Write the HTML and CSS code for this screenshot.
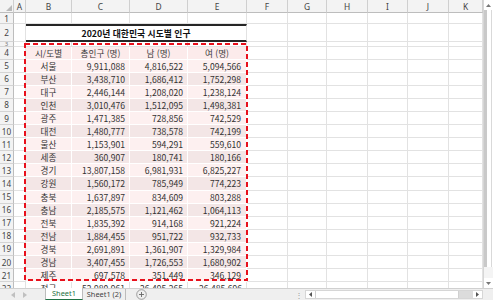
FILE: index.html
```html
<!DOCTYPE html>
<html lang="ko">
<head>
<meta charset="utf-8">
<title>Sheet</title>
<link rel="stylesheet" href="styles.css">
</head>
<body>
<div class="app">
  <div class="main">
    <div class="sheet">
      <div class="row hdr">
        <div class="corner"><span class="tri"></span></div>
        <div class="ch">A</div><div class="ch">B</div><div class="ch">C</div><div class="ch">D</div><div class="ch">E</div><div class="ch">F</div><div class="ch">G</div><div class="ch">H</div><div class="ch">I</div><div class="ch">J</div><div class="ch">K</div>
      </div>
      <div class="row r1">
        <div class="rh">1</div><i></i><i></i><i></i><i></i><i></i><i></i><i></i><i></i><i></i><i></i><i></i>
      </div>
      <div class="row r2">
        <div class="rh">2</div><i></i><div class="title">2020년 대한민국 시도별 인구</div><i></i><i></i><i></i><i></i><i></i><i></i>
      </div>
      <div class="row r3">
        <div class="rh rh3">3</div><i></i><i></i><i></i><i></i><i></i><i></i><i></i><i></i><i></i><i></i><i></i>
      </div>
      <div class="row rd th">
        <div class="rh">4</div><i></i><div class="t ctr">시/도별</div><div class="t ctr">총인구 (명)</div><div class="t ctr">남 (명)</div><div class="t ctr">여 (명)</div><i></i><i></i><i></i><i></i><i></i><i></i>
      </div>
      <div class="row rd lt">
        <div class="rh">5</div><i></i><div class="t ctr">서울</div><div class="t num">9,911,088</div><div class="t num">4,816,522</div><div class="t num">5,094,566</div><i></i><i></i><i></i><i></i><i></i><i></i>
      </div>
      <div class="row rd dk">
        <div class="rh">6</div><i></i><div class="t ctr">부산</div><div class="t num">3,438,710</div><div class="t num">1,686,412</div><div class="t num">1,752,298</div><i></i><i></i><i></i><i></i><i></i><i></i>
      </div>
      <div class="row rd lt">
        <div class="rh">7</div><i></i><div class="t ctr">대구</div><div class="t num">2,446,144</div><div class="t num">1,208,020</div><div class="t num">1,238,124</div><i></i><i></i><i></i><i></i><i></i><i></i>
      </div>
      <div class="row rd dk">
        <div class="rh">8</div><i></i><div class="t ctr">인천</div><div class="t num">3,010,476</div><div class="t num">1,512,095</div><div class="t num">1,498,381</div><i></i><i></i><i></i><i></i><i></i><i></i>
      </div>
      <div class="row rd lt">
        <div class="rh">9</div><i></i><div class="t ctr">광주</div><div class="t num">1,471,385</div><div class="t num">728,856</div><div class="t num">742,529</div><i></i><i></i><i></i><i></i><i></i><i></i>
      </div>
      <div class="row rd dk">
        <div class="rh">10</div><i></i><div class="t ctr">대전</div><div class="t num">1,480,777</div><div class="t num">738,578</div><div class="t num">742,199</div><i></i><i></i><i></i><i></i><i></i><i></i>
      </div>
      <div class="row rd lt">
        <div class="rh">11</div><i></i><div class="t ctr">울산</div><div class="t num">1,153,901</div><div class="t num">594,291</div><div class="t num">559,610</div><i></i><i></i><i></i><i></i><i></i><i></i>
      </div>
      <div class="row rd dk">
        <div class="rh">12</div><i></i><div class="t ctr">세종</div><div class="t num">360,907</div><div class="t num">180,741</div><div class="t num">180,166</div><i></i><i></i><i></i><i></i><i></i><i></i>
      </div>
      <div class="row rd lt">
        <div class="rh">13</div><i></i><div class="t ctr">경기</div><div class="t num">13,807,158</div><div class="t num">6,981,931</div><div class="t num">6,825,227</div><i></i><i></i><i></i><i></i><i></i><i></i>
      </div>
      <div class="row rd dk">
        <div class="rh">14</div><i></i><div class="t ctr">강원</div><div class="t num">1,560,172</div><div class="t num">785,949</div><div class="t num">774,223</div><i></i><i></i><i></i><i></i><i></i><i></i>
      </div>
      <div class="row rd lt">
        <div class="rh">15</div><i></i><div class="t ctr">충북</div><div class="t num">1,637,897</div><div class="t num">834,609</div><div class="t num">803,288</div><i></i><i></i><i></i><i></i><i></i><i></i>
      </div>
      <div class="row rd dk">
        <div class="rh">16</div><i></i><div class="t ctr">충남</div><div class="t num">2,185,575</div><div class="t num">1,121,462</div><div class="t num">1,064,113</div><i></i><i></i><i></i><i></i><i></i><i></i>
      </div>
      <div class="row rd lt">
        <div class="rh">17</div><i></i><div class="t ctr">전북</div><div class="t num">1,835,392</div><div class="t num">914,168</div><div class="t num">921,224</div><i></i><i></i><i></i><i></i><i></i><i></i>
      </div>
      <div class="row rd dk">
        <div class="rh">18</div><i></i><div class="t ctr">전남</div><div class="t num">1,884,455</div><div class="t num">951,722</div><div class="t num">932,733</div><i></i><i></i><i></i><i></i><i></i><i></i>
      </div>
      <div class="row rd lt">
        <div class="rh">19</div><i></i><div class="t ctr">경북</div><div class="t num">2,691,891</div><div class="t num">1,361,907</div><div class="t num">1,329,984</div><i></i><i></i><i></i><i></i><i></i><i></i>
      </div>
      <div class="row rd dk">
        <div class="rh">20</div><i></i><div class="t ctr">경남</div><div class="t num">3,407,455</div><div class="t num">1,726,553</div><div class="t num">1,680,902</div><i></i><i></i><i></i><i></i><i></i><i></i>
      </div>
      <div class="row rd lt">
        <div class="rh">21</div><i></i><div class="t ctr">제주</div><div class="t num">697,578</div><div class="t num">351,449</div><div class="t num">346,129</div><i></i><i></i><i></i><i></i><i></i><i></i>
      </div>
      <div class="row rd">
        <div class="rh">22</div><i></i><div class="c ctr">전국</div><div class="c num">52,980,961</div><div class="c num">26,495,265</div><div class="c num">26,485,696</div><i></i><i></i><i></i><i></i><i></i><i></i>
      </div>
      <svg class="marquee" width="224" height="238" viewBox="0 0 224 238">
        <rect x="1" y="1" width="222" height="236" fill="none" stroke="#e8101c" stroke-width="2" stroke-dasharray="5 3"/>
      </svg>
    </div>
    <div class="vscroll">
      <div class="vbtn"><svg width="5" height="3" viewBox="0 0 5 3"><path d="M0 3 L2.5 0 L5 3Z" fill="#777"/></svg></div>
      <div class="vthumb"></div>
      <div class="vtrack"></div>
      <div class="vbtn"><svg width="5" height="3" viewBox="0 0 5 3"><path d="M0 0 L2.5 3 L5 0Z" fill="#777"/></svg></div>
    </div>
  </div>
  <div class="tabbar">
    <div class="nav">
      <svg width="4" height="6" viewBox="0 0 4 6"><path d="M4 0 L0 3 L4 6Z" fill="#c0c0c0"/></svg>
      <svg width="4" height="6" viewBox="0 0 4 6"><path d="M0 0 L4 3 L0 6Z" fill="#c0c0c0"/></svg>
    </div>
    <div class="tab active">Sheet1</div>
    <div class="tab">Sheet1 (2)</div>
    <div class="add"><svg width="11" height="11" viewBox="0 0 11 11"><circle cx="5.5" cy="5.5" r="4.8" fill="none" stroke="#888" stroke-width="0.8"/><path d="M5.5 3 V8 M3 5.5 H8" stroke="#666" stroke-width="0.9"/></svg></div>
    <div class="spacer"></div>
    <div class="dots">⋮</div>
    <div class="hscroll">
      <div class="hbtn"><svg width="3" height="5" viewBox="0 0 3 5"><path d="M3 0 L0 2.5 L3 5Z" fill="#555"/></svg></div>
      <div class="hthumb"></div>
      <div class="htrack"></div>
      <div class="hbtn"><svg width="3" height="5" viewBox="0 0 3 5"><path d="M0 0 L3 2.5 L0 5Z" fill="#555"/></svg></div>
    </div>
    <div class="corner2"></div>
  </div>
</div>
</body>
</html>
```

FILE: styles.css
```css
* { box-sizing: border-box; }
html, body { margin: 0; padding: 0; background: #fff; }
body { font-family: "Noto Sans CJK KR", "Noto Sans", sans-serif; color: #333; }

.app { width: 493px; height: 300px; display: flex; flex-direction: column; overflow: hidden; }
.main { height: 288px; display: flex; flex: none; }
.sheet { position: relative; width: 483px; height: 288px; overflow: hidden; }

.row {
  display: grid;
  grid-template-columns: 14px 12px 46px 58px 58px 59px 41px 39px 41px 40px 41px 34px;
  height: 13.1px;
}
.row > * {
  border-right: 1px solid #e2e2e2;
  border-bottom: 1px solid #e2e2e2;
  overflow: hidden;
  white-space: nowrap;
  font-size: 8.6px;
  display: flex;
  align-items: center;
}

.hdr { height: 13px; background: #f3f3f3; }
.hdr > * { border-color: #cfcfcf; border-bottom: 1px solid #bdbdbd; justify-content: center; color: #444; font-family: "Noto Sans", sans-serif; font-size: 8.4px; }
.corner { position: relative; }
.tri { position: absolute; right: 1px; bottom: 1px; width: 0; height: 0; border-left: 6px solid transparent; border-bottom: 6px solid #b9b9b9; }

.r1 { height: 11px; }
.r2 { height: 18px; }
.r3 { height: 4.5px; }
.rd { height: 13.1px; }

.rh {
  background: #f3f3f3;
  border-right: 1px solid #bdbdbd !important;
  border-bottom-color: #d4d4d4 !important;
  justify-content: center;
  color: #444;
  font-family: "Noto Sans", sans-serif;
  font-size: 8.2px !important;
}
.rh3 { align-items: flex-start; line-height: 4px; font-size: 6px !important; color: #777; }

.title {
  grid-column: 3 / 7;
  border-top: 2px solid #262626;
  border-bottom: 2px solid #262626 !important;
  border-right: 1px solid #e2e2e2;
  justify-content: center;
  font-weight: 700;
  color: #111;
  font-size: 8.8px !important;
}

.t { border-right: 1px solid #fff; border-bottom: 1px solid #fff; }
.th .t { background: #fcebeb; color: #3a3a3a; }
.lt .t { background: #fdf0f0; }
.dk .t { background: #f3e6e6; }
.ctr { justify-content: center; }
.num { justify-content: flex-end; padding-right: 4px; }
.row > .t.num:nth-child(6) { padding-right: 5px; }

.marquee { position: absolute; left: 24px; top: 43px; }

.vscroll { width: 10px; height: 288px; display: flex; flex-direction: column; background: #fff; border-left: 1px solid #d6d6d6; }
.vbtn { height: 10px; display: flex; align-items: center; justify-content: center; flex: none; }
.vthumb { height: 257px; margin: 0 1px 0 0; border-left: 3px solid #c9c9c9; border-right: 1px solid #d9d9d9; background: #fff; flex: none; }
.vtrack { flex: 1; background: #f4f4f4; }

.tabbar { height: 12px; flex: none; display: flex; align-items: stretch; background: #efefef; border-top: 1px solid #d0d0d0; font-family: "Noto Sans", sans-serif; font-size: 7.4px; line-height: 11px; color: #444; white-space: nowrap; }
.nav { width: 45px; flex: none; display: flex; align-items: center; gap: 8px; padding-left: 11px; }
.tab { flex: none; display: flex; align-items: center; justify-content: center; padding: 0 2px; border-right: 1px solid #bcbcbc; white-space: nowrap; }
.tab.active { width: 38px; background: #fff; color: #1f7244; border-left: 1px solid #bcbcbc; margin-top: -1px; border-bottom: 1px solid #1f7244; }
.tab:not(.active) { width: 43px; }
.add { width: 30px; flex: none; display: flex; align-items: center; justify-content: center; }
.spacer { flex: 1; }
.dots { width: 12px; flex: none; color: #9a9a9a; display: flex; align-items: center; justify-content: center; font-size: 8px; }
.hscroll { width: 178px; flex: none; margin: 1px 0; display: flex; background: #fff; border: 1px solid #d6d6d6; }
.hbtn { width: 9px; display: flex; align-items: center; justify-content: center; }
.hthumb { width: 144px; background: #fff; border-left: 1px solid #d0d0d0; border-right: 1px solid #d0d0d0; }
.htrack { flex: 1; background: #dcdcdc; }
.corner2 { width: 10px; flex: none; background: #efefef; }
```
